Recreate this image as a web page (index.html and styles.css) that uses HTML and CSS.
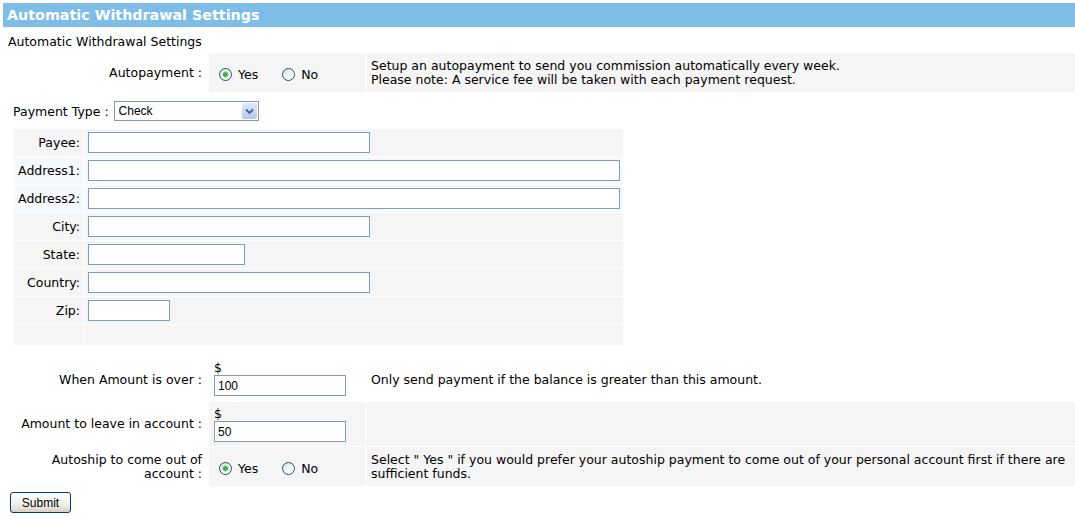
FILE: index.html
```html
<!DOCTYPE html>
<html lang="en">
<head>
    <meta charset="UTF-8">
    <title>Automatic Withdrawal Settings</title>
    <link rel="stylesheet" href="styles.css">
</head>
<body>
    <div class="title-bar">Automatic Withdrawal Settings</div>

    <div class="page">
        <p class="subtitle">Automatic Withdrawal Settings</p>

        <div class="opt-row first">
            <div class="opt-label">Autopayment :</div>
            <div class="opt-field radios">
                <label><input type="radio" name="autopay" checked> Yes</label>
                <label><input type="radio" name="autopay"> No</label>
            </div>
            <div class="opt-desc">Setup an autopayment to send you commission automatically every week.<br>Please note: A service fee will be taken with each payment request.</div>
        </div>

        <div class="type-line">
            <span>Payment Type :</span>
            <span class="select-wrap">
                <select class="pay-type">
                    <option>Check</option>
                    <option>Direct Deposit</option>
                </select>
                <span class="select-btn">
                    <svg width="9" height="7" viewBox="0 0 9 7"><path d="M1 1.5 L4.5 5 L8 1.5" fill="none" stroke="#4d6185" stroke-width="1.8"/></svg>
                </span>
            </span>
        </div>

        <div class="address">
            <div class="addr-label">Payee:</div>
            <div class="addr-field"><input type="text" class="w-md"></div>
            <div class="addr-label blue">Address1:</div>
            <div class="addr-field blue"><input type="text" class="w-lg"></div>
            <div class="addr-label blue">Address2:</div>
            <div class="addr-field blue"><input type="text" class="w-lg"></div>
            <div class="addr-label">City:</div>
            <div class="addr-field"><input type="text" class="w-md"></div>
            <div class="addr-label">State:</div>
            <div class="addr-field"><input type="text" class="w-sm"></div>
            <div class="addr-label">Country:</div>
            <div class="addr-field"><input type="text" class="w-md"></div>
            <div class="addr-label">Zip:</div>
            <div class="addr-field"><input type="text" class="w-xs"></div>
            <div class="addr-label"></div>
            <div class="addr-field"></div>
        </div>

        <div class="opt-row plain">
            <div class="opt-label">When Amount is over :</div>
            <div class="opt-field money"><span>$</span><input type="text" value="100"></div>
            <div class="opt-desc">Only send payment if the balance is greater than this amount.</div>
        </div>

        <div class="opt-row tall">
            <div class="opt-label">Amount to leave in account :</div>
            <div class="opt-field money"><span>$</span><input type="text" value="50"></div>
            <div class="opt-desc"></div>
        </div>

        <div class="opt-row">
            <div class="opt-label">Autoship to come out of<br>account :</div>
            <div class="opt-field radios">
                <label><input type="radio" name="autoship" checked> Yes</label>
                <label><input type="radio" name="autoship"> No</label>
            </div>
            <div class="opt-desc">Select " Yes " if you would prefer your autoship payment to come out of your personal account first if there are sufficient funds.</div>
        </div>

        <button type="button" class="submit">Submit</button>
    </div>
</body>
</html>
```

FILE: styles.css
```css
body {
    margin: 0;
    padding: 0;
    background: #fff;
    color: #000;
    font-family: "DejaVu Sans", Verdana, sans-serif;
    font-size: 12.5px;
}

.title-bar {
    margin: 3px 0 0 3px;
    height: 24px;
    line-height: 24px;
    padding-left: 4px;
    background: #7dbde7;
    color: #fff;
    font-size: 14.3px;
    font-weight: bold;
}

.page {
    padding-left: 8px;
}

.subtitle {
    margin: 8px 0 5px;
    line-height: 13px;
}

.opt-row {
    display: grid;
    grid-template-columns: 200px 156px 1fr;
    column-gap: 1px;
    min-height: 39px;
    margin-bottom: 1px;
}

.opt-label {
    display: flex;
    align-items: center;
    justify-content: flex-end;
    text-align: right;
    padding-right: 6px;
    line-height: 14px;
}

.opt-field,
.opt-desc {
    background: #f5f5f5;
}

.opt-row.plain .opt-field,
.opt-row.plain .opt-desc {
    background: #fff;
}

.opt-desc {
    display: flex;
    align-items: center;
    padding-left: 5px;
    padding-right: 4px;
    line-height: 14px;
}

.radios {
    display: flex;
    align-items: center;
    gap: 24px;
    padding-left: 10px;
    padding-top: 3px;
}

.radios label {
    display: flex;
    align-items: center;
    gap: 6px;
}

.radios input {
    appearance: none;
    margin: 0;
    width: 13px;
    height: 13px;
    border: 1px solid #1c5180;
    border-radius: 50%;
    background: linear-gradient(135deg, #dcdcd5, #fff 70%);
}

.radios input:checked {
    background: radial-gradient(circle, #3cb53c 0 2px, #8fd38f 2.5px, transparent 3.5px),
                linear-gradient(135deg, #dcdcd5, #fff 70%);
}

.type-line {
    display: flex;
    align-items: center;
    gap: 5px;
    margin: 9px 0 8px 5px;
}

.select-wrap {
    position: relative;
    display: inline-block;
}

.pay-type {
    appearance: none;
    width: 145px;
    height: 20px;
    margin: 0;
    padding: 0 0 0 4px;
    border: 1px solid #7f9db9;
    border-radius: 0;
    background: #fff;
    font-family: "Liberation Sans", Arial, sans-serif;
    font-size: 12px;
    color: #000;
}

.select-btn {
    position: absolute;
    top: 2px;
    right: 2px;
    width: 15px;
    height: 16px;
    display: flex;
    align-items: center;
    justify-content: center;
    border-radius: 2px;
    background: linear-gradient(#dce7fb, #b5c9f0);
    pointer-events: none;
}

.address {
    display: grid;
    grid-template-columns: 70px 538px;
    grid-template-rows: repeat(7, 27px) 20px;
    gap: 1px;
    margin: 0 0 15px 6px;
    width: 609px;
}

.addr-label {
    background: #f5f5f5;
    display: flex;
    align-items: center;
    justify-content: flex-end;
    padding-right: 4px;
}

.addr-field {
    background: #f5f5f5;
    display: flex;
    align-items: center;
    padding-left: 3px;
}

.addr-label.blue,
.addr-field.blue {
    background: #f6f9fc;
}

.address input,
.money input {
    box-sizing: border-box;
    height: 21px;
    margin: 0;
    padding: 2px 3px;
    border: 1px solid #7f9db9;
    border-radius: 0;
    font-family: "Liberation Sans", Arial, sans-serif;
    font-size: 12px;
}

.w-xs { width: 82px; }
.w-sm { width: 157px; }
.w-md { width: 282px; }
.w-lg { width: 532px; }

.money {
    display: flex;
    flex-direction: column;
    align-items: flex-start;
    padding: 1px 0 4px 5px;
    line-height: 14px;
}

.money input {
    width: 132px;
}

.opt-row.plain {
    margin-bottom: 2px;
}

.opt-row.tall {
    min-height: 44px;
}

.opt-row.tall .money {
    padding-top: 5px;
}

.submit {
    margin-top: 5px;
    margin-left: 2px;
    width: 61px;
    height: 21px;
    padding: 0;
    border: 1px solid #003c74;
    border-radius: 3px;
    background: linear-gradient(#fff, #f0f0ea 60%, #d6d0c5);
    font-family: "Liberation Sans", Arial, sans-serif;
    font-size: 12px;
    color: #000;
}
```
